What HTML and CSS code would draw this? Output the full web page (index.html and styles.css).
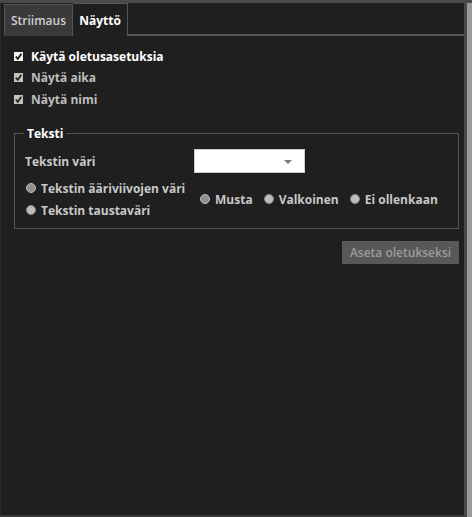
FILE: index.html
```html
<!DOCTYPE html>
<html lang="fi">
<head>
<meta charset="utf-8">
<title>Näyttö</title>
<link rel="stylesheet" href="styles.css">
</head>
<body>
<div class="topstrip"></div>
<div class="window">
  <div class="tabs">
    <div class="tab">Striimaus</div>
    <div class="tab active">Näyttö</div>
    <div class="tabline"></div>
  </div>
  <div class="content">
    <label class="check main"><span class="box"><svg viewBox="0 0 9 9" width="9" height="9"><path d="M1.8 4.6 L3.8 6.8 L7.4 1.8" fill="none" stroke="#1e1e1e" stroke-width="1.8"/></svg></span>Käytä oletusasetuksia</label>
    <label class="check"><span class="box dim"><svg viewBox="0 0 9 9" width="9" height="9"><path d="M1.8 4.6 L3.8 6.8 L7.4 1.8" fill="none" stroke="#2a2a2a" stroke-width="1.8"/></svg></span>Näytä aika</label>
    <label class="check"><span class="box dim"><svg viewBox="0 0 9 9" width="9" height="9"><path d="M1.8 4.6 L3.8 6.8 L7.4 1.8" fill="none" stroke="#2a2a2a" stroke-width="1.8"/></svg></span>Näytä nimi</label>

    <fieldset class="group">
      <legend>Teksti</legend>
      <div class="row">
        <span class="lbl">Tekstin väri</span>
        <div class="select"><span class="arrow"></span></div>
      </div>
      <div class="radios">
        <div class="col">
          <span class="radio"><span class="dot dark"></span>Tekstin ääriviivojen väri</span>
          <span class="radio"><span class="dot"></span>Tekstin taustaväri</span>
        </div>
        <div class="opts">
          <span class="radio"><span class="dot dark"></span>Musta</span>
          <span class="radio"><span class="dot"></span>Valkoinen</span>
          <span class="radio"><span class="dot"></span>Ei ollenkaan</span>
        </div>
      </div>
    </fieldset>
    <div class="actions">
      <button class="btn" disabled>Aseta oletukseksi</button>
    </div>
  </div>
</div>
</body>
</html>
```

FILE: styles.css
```css
html, body {
  margin: 0;
  padding: 0;
  height: 100%;
}
body {
  background: #202020;
  font-family: "Open Sans", "Liberation Sans", sans-serif;
  font-weight: 700;
  font-size: 12px;
  color: #c4c4c4;
  overflow: hidden;
  display: flex;
  flex-direction: column;
}
.topstrip {
  height: 3px;
  background: #4a4a4a;
  flex: none;
}
.window {
  flex: 1;
  margin-right: 5px;
  border-left: 1px solid #2c2c2c;
  border-right: 3px solid #4a4a4a;
  border-bottom: 2px solid #3a3a3a;
  background: #1f1f1f;
  display: flex;
  flex-direction: column;
  box-shadow: 5px 0 0 #9a9a9a;
}
.tabs {
  display: flex;
  align-items: flex-end;
  height: 33px;
  padding-left: 3px;
}
.tab {
  height: 32px;
  box-sizing: border-box;
  padding: 0 6px;
  display: flex;
  align-items: center;
  font-size: 12px;
  color: #d0d0d0;
  background: #3a3a3a;
  border: 1px solid #555;
  border-bottom: none;
  font-weight: 600;
  width: 69px;
  justify-content: center;
}
.tab.active {
  background: #1f1f1f;
  color: #ffffff;
  font-weight: 700;
  height: 33px;
  border-left: none;
  border-bottom: none;
  padding: 0 5px;
  width: 55px;
}
.tabline {
  flex: 1;
  border-bottom: 2px solid #555;
}
.content {
  padding: 10px 8px 0 13px;
}
.check {
  display: flex;
  align-items: center;
  gap: 8px;
  height: 22px;
  color: #bdbdbd;
}
.check.main {
  color: #ffffff;
  height: 20px;
}
.box {
  width: 9px;
  height: 9px;
  background: #f2f2f2;
  display: inline-flex;
}
.box.dim {
  background: #c2c2c2;
}
.group {
  margin: 15px 0 0 0;
  border: 1px solid #555;
  padding: 7px 10px 8px 10px;
  width: 423px;
}
.group legend {
  color: #fff;
  padding: 0 3px;
  margin-left: -1px;
  font-size: 12px;
}
.row {
  display: flex;
  align-items: center;
  height: 24px;
}
.lbl {
  width: 169px;
  color: #c8c8c8;
}
.select {
  width: 111px;
  height: 24px;
  background: #ffffff;
  position: relative;
  box-sizing: border-box;
  border: 1px solid #ccc;
}
.arrow {
  position: absolute;
  right: 12px;
  top: 10px;
  border-left: 4px solid transparent;
  border-right: 4px solid transparent;
  border-top: 4px solid #777;
}
.radios {
  display: flex;
  align-items: center;
  margin-top: 5px;
}
.col {
  display: flex;
  flex-direction: column;
  gap: 2px;
  width: 175px;
}
.opts {
  display: flex;
  gap: 11px;
}
.radio {
  display: flex;
  align-items: center;
  gap: 5px;
  height: 20px;
  color: #c8c8c8;
  white-space: nowrap;
}
.col .radio {
  padding-left: 1px;
}
.dot {
  width: 10px;
  height: 10px;
  border-radius: 50%;
  background: #bdbdbd;
  border: 1px solid #8a8a8a;
  box-sizing: border-box;
}
.dot.dark {
  background: #8f8f8f;
  border: 1px solid #bdbdbd;
}
.actions {
  display: flex;
  justify-content: flex-end;
  margin-top: 12px;
  width: 445px;
}
.btn {
  width: 117px;
  height: 23px;
  border: none;
  background: #585858;
  color: #9c9c9c;
  font-family: inherit;
  font-weight: 600;
  font-size: 12px;
  padding: 0;
  border-radius: 1px;
}
```
